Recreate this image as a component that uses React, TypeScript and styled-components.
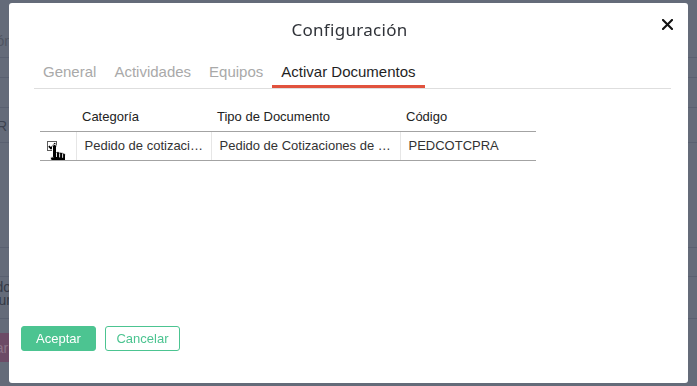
import React from "react";
import styled, { createGlobalStyle } from "styled-components";

const GlobalStyle = createGlobalStyle`
  html, body { margin: 0; padding: 0; }
  body {
    background: #646b79;
    overflow: hidden;
    font-family: "Liberation Sans", Arial, sans-serif;
  }
`;

/* ---------- background page (dimmed) ---------- */
const BgPage = styled.div`
  display: flex;
  flex-direction: column;
  width: 100%;
  height: 386px;
`;

const BgRow = styled.div<{ $h: number; $line?: boolean; $top?: boolean }>`
  height: ${(p) => p.$h}px;
  box-sizing: border-box;
  border-bottom: ${(p) => (p.$line === false ? "none" : "1px solid #596070")};
  display: flex;
  align-items: ${(p) => (p.$top ? "flex-start" : "flex-end")};
`;

const BgText = styled.div<{ $w: number; $color: string; $pb: number }>`
  width: ${(p) => p.$w}px;
  overflow: hidden;
  display: flex;
  flex-direction: column;
  align-items: flex-end;
  padding-bottom: ${(p) => p.$pb}px;
  color: ${(p) => p.$color};
  font-size: 14px;
  line-height: 13px;
  white-space: nowrap;
`;

const BgButton = styled.div`
  margin-top: 14px;
  width: 40px;
  margin-left: -28px;
  height: 29px;
  background: #6c4b66;
  color: #8c7589;
  font-size: 14px;
  display: flex;
  align-items: center;
  justify-content: flex-end;
  border-radius: 0 3px 3px 0;
`;

/* ---------- modal ---------- */
const Modal = styled.div`
  position: fixed;
  left: 9px;
  top: 3px;
  width: 679px;
  height: 380px;
  background: #ffffff;
  border-radius: 3px;
  display: flex;
  flex-direction: column;
  box-sizing: border-box;
`;

const Header = styled.div`
  position: relative;
  height: 52px;
  display: flex;
  align-items: center;
  justify-content: center;
`;

const Title = styled.h2`
  margin: 0;
  padding: 1px 0 0 2px;
  font-family: "Noto Sans", "Open Sans", sans-serif;
  font-weight: 400;
  font-size: 17px;
  letter-spacing: 0.3px;
  color: #303339;
`;

const CloseButton = styled.button`
  position: absolute;
  right: 14px;
  top: 14px;
  width: 14px;
  height: 14px;
  padding: 0;
  border: none;
  background: transparent;
  display: flex;
  align-items: center;
  justify-content: center;
  cursor: pointer;
`;

const Tabs = styled.div`
  display: flex;
  margin: 3px 17px 0 25px;
  border-bottom: 1px solid #dedede;
`;

const Tab = styled.div<{ $active?: boolean }>`
  box-sizing: border-box;
  height: 30px;
  padding: 5px 9px 0;
  font-size: 15px;
  line-height: 18px;
  color: ${(p) => (p.$active ? "#1f1f1f" : "#a9a9a9")};
  border-bottom: 3px solid ${(p) => (p.$active ? "#e1523d" : "transparent")};
  white-space: nowrap;
`;

const Body = styled.div`
  flex: 1;
  padding: 13px 0 0 31px;
`;

const Table = styled.table`
  border-collapse: collapse;
  table-layout: fixed;
  width: 496px;
  font-size: 13px;
`;

const Th = styled.th<{ $w: number }>`
  width: ${(p) => p.$w}px;
  height: 29px;
  padding: 0 6px;
  text-align: left;
  font-weight: 400;
  color: #222;
  border-bottom: 1px solid #a3a3a3;
  box-sizing: border-box;
`;

const Td = styled.td<{ $first?: boolean }>`
  height: 29px;
  padding: ${(p) => (p.$first ? "0 0 0 7px" : "0 5px 0 8px")};
  color: #333;
  border-bottom: 1px solid #a3a3a3;
  border-left: ${(p) => (p.$first ? "none" : "1px solid #e6e6e6")};
  white-space: nowrap;
  overflow: hidden;
  text-overflow: ellipsis;
  box-sizing: border-box;
`;

const CheckWrap = styled.div`
  position: relative;
  width: 10px;
  height: 10px;
  margin-top: 1px;
`;

const CheckBox = styled.div`
  width: 10px;
  height: 10px;
  box-sizing: border-box;
  border: 1px solid #5d5d5d;
  background: #fff;
  display: flex;
  align-items: center;
  justify-content: center;
`;

const Cursor = styled.svg`
  position: absolute;
  left: 3px;
  top: 3px;
`;

const Footer = styled.div`
  display: flex;
  gap: 9px;
  padding: 0 0 32px 12px;
`;

const Button = styled.button<{ $primary?: boolean }>`
  width: 75px;
  height: 25px;
  box-sizing: border-box;
  border-radius: 3px;
  font-family: "Liberation Sans", Arial, sans-serif;
  font-size: 13px;
  padding: 0;
  cursor: pointer;
  border: 1px solid #4cc491;
  background: ${(p) => (p.$primary ? "#4cc491" : "#ffffff")};
  color: ${(p) => (p.$primary ? "#ffffff" : "#4cc491")};
`;

export default function App() {
  return (
    <>
      <GlobalStyle />
      <BgPage>
        <BgRow $h={58}>
          <BgText $w={12} $color="#4f5562" $pb={9}>
            <span>Descripción</span>
          </BgText>
        </BgRow>
        <BgRow $h={20} />
        <BgRow $h={30} />
        <BgRow $h={35}>
          <BgText $w={7} $color="#3d4350" $pb={9}>
            <span>DOR</span>
          </BgText>
        </BgRow>
        <BgRow $h={105} />
        <BgRow $h={29} />
        <BgRow $h={42}>
          <BgText $w={11} $color="#343a46" $pb={11}>
            <span>Pedido</span>
            <span>Compur</span>
          </BgText>
        </BgRow>
        <BgRow $h={60} $line={false} $top>
          <BgButton>Guardar&nbsp;</BgButton>
        </BgRow>
      </BgPage>

      <Modal>
        <Header>
          <Title>Configuración</Title>
          <CloseButton aria-label="Cerrar">
            <svg width="11" height="11" viewBox="0 0 11 11">
              <path d="M1 1 L10 10 M10 1 L1 10" stroke="#111" strokeWidth="2.1" strokeLinecap="square" />
            </svg>
          </CloseButton>
        </Header>

        <Tabs>
          <Tab>General</Tab>
          <Tab>Actividades</Tab>
          <Tab>Equipos</Tab>
          <Tab $active>Activar Documentos</Tab>
        </Tabs>

        <Body>
          <Table>
            <thead>
              <tr>
                <Th $w={36}></Th>
                <Th $w={135}>Categoría</Th>
                <Th $w={189}>Tipo de Documento</Th>
                <Th $w={136}>Código</Th>
              </tr>
            </thead>
            <tbody>
              <tr>
                <Td $first>
                  <CheckWrap>
                    <CheckBox>
                      <svg width="8" height="8" viewBox="0 0 8 8">
                        <path d="M0.8 4.2 L3 6.4 L7.2 1.2" stroke="#000" strokeWidth="1.7" fill="none" />
                      </svg>
                    </CheckBox>
                    <Cursor width="16" height="22" viewBox="0 0 16 22">
                      <path
                        d="M4.5 0.5 C5.6 0.5 6.5 1.4 6.5 2.5 V8.2 C6.9 7.8 7.4 7.6 8 7.6 C8.8 7.6 9.4 8 9.7 8.6 C10 8.3 10.5 8.1 11 8.1 C11.8 8.1 12.4 8.6 12.6 9.3 C12.9 9.1 13.2 9.1 13.5 9.1 C14.6 9.1 15.5 10 15.5 11.1 V16.5 C15.5 19.2 13.6 21.5 11 21.5 H7 C5.1 21.5 3.9 20.5 2.9 19 L0.8 15.4 C0.3 14.5 0.6 13.5 1.4 13.1 C2 12.7 2.6 12.8 3.1 13.2 L2.5 12.4 V2.5 C2.5 1.4 3.4 0.5 4.5 0.5 Z"
                        fill="#000"
                        stroke="#fff"
                        strokeWidth="1"
                      />
                      <path d="M6.5 9 V13 M9.6 9.4 V13.4 M12.6 10 V13.8" stroke="#fff" strokeWidth="0.9" />
                      <path d="M6 19 H12" stroke="#555" strokeWidth="0.8" strokeDasharray="1 1" />
                    </Cursor>
                  </CheckWrap>
                </Td>
                <Td>Pedido de cotización de compra</Td>
                <Td>Pedido de Cotizaciones de Compra</Td>
                <Td>PEDCOTCPRA</Td>
              </tr>
            </tbody>
          </Table>
        </Body>

        <Footer>
          <Button $primary>Aceptar</Button>
          <Button>Cancelar</Button>
        </Footer>
      </Modal>
    </>
  );
}
